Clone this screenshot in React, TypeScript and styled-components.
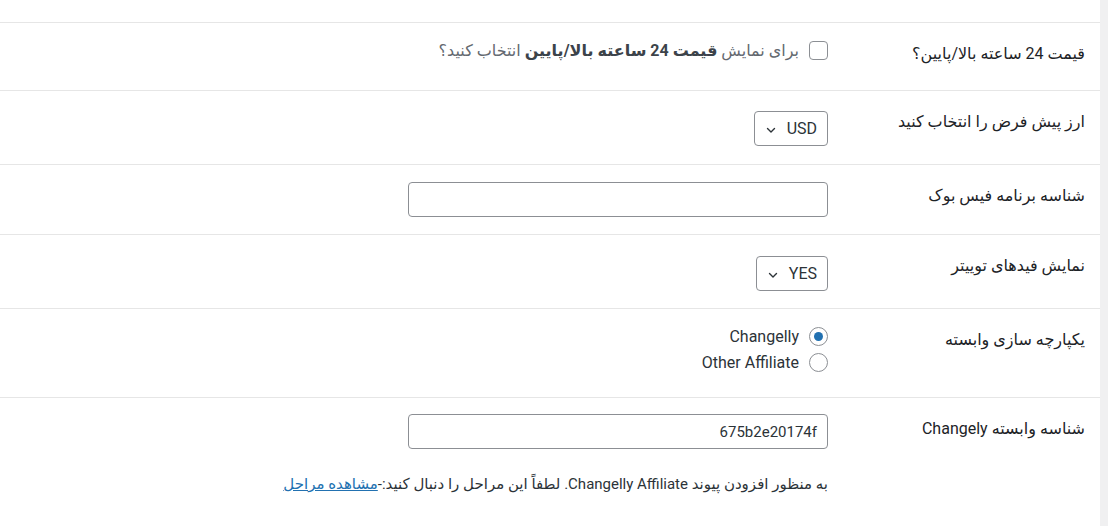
import styled, { createGlobalStyle } from 'styled-components'

const GlobalStyle = createGlobalStyle`
  html, body {
    margin: 0;
    padding: 0;
    background: #f0f0f1;
  }
  body {
    font-family: Roboto, "DejaVu Sans", sans-serif;
    color: #1d2327;
  }
`

const Panel = styled.div`
  width: 1100px;
  min-height: 526px;
  background: #fff;
  direction: rtl;
  padding-top: 22px;
  box-sizing: border-box;
`

const Row = styled.div<{ h: number }>`
  display: grid;
  grid-template-columns: 262px 1fr;
  height: ${p => p.h}px;
  border-top: 1px solid #e6e6e6;
  box-sizing: border-box;
`

const Label = styled.div`
  padding: 20px 15px 0 0;
  font-size: 16px;
  line-height: 22px;
  color: #1d2327;
`

const Cell = styled.div<{ top: number }>`
  padding: ${p => p.top}px 10px 0 0;
  display: flex;
  flex-direction: column;
  align-items: flex-start;
`

const CheckLine = styled.label`
  display: flex;
  align-items: center;
  gap: 10px;
  font-size: 16px;
  color: #646970;
  b {
    color: #3c434a;
    font-weight: 700;
  }
`

const Box = styled.span`
  width: 17px;
  height: 17px;
  border: 1px solid #8c8f94;
  border-radius: 4px;
  background: #fff;
  flex: none;
`

const Select = styled.div`
  display: flex;
  align-items: center;
  gap: 10px;
  height: 35px;
  box-sizing: border-box;
  padding: 0 10px;
  border: 1px solid #8c8f94;
  border-radius: 4px;
  font-size: 16px;
  color: #2c3338;
  background: #fff;
  svg {
    margin-top: 3px;
  }
`

const Input = styled.div`
  width: 420px;
  height: 35px;
  box-sizing: border-box;
  border: 1px solid #8c8f94;
  border-radius: 4px;
  padding: 0 10px;
  display: flex;
  align-items: center;
  font-size: 15px;
  color: #2c3338;
  background: #fff;
`

const RadioLine = styled.label`
  display: flex;
  align-items: center;
  gap: 10px;
  height: 26px;
  font-size: 16px;
  color: #2c3338;
`

const Radio = styled.span<{ checked?: boolean }>`
  width: 17px;
  height: 17px;
  border: 1px solid #8c8f94;
  border-radius: 50%;
  background: #fff;
  display: grid;
  place-items: center;
  flex: none;
  &::after {
    content: '';
    width: 9px;
    height: 9px;
    border-radius: 50%;
    background: ${p => (p.checked ? '#2271b1' : 'transparent')};
  }
`

const Description = styled.p`
  margin: 26px 0 0;
  font-size: 15px;
  color: #2c3338;
  a {
    color: #2271b1;
    text-decoration: underline;
  }
`

const Chevron = () => (
  <svg width="12" height="12" viewBox="0 0 12 12" fill="none">
    <path d="M2.5 4.5 6 8l3.5-3.5" stroke="#2c3338" strokeWidth="1.4" strokeLinecap="round" strokeLinejoin="round" />
  </svg>
)

const Dropdown = (props: { value: string }) => (
  <Select>
    <span>{props.value}</span>
    <Chevron />
  </Select>
)

export default function App() {
  return (
    <>
      <GlobalStyle />
      <Panel>
        <Row h={68}>
          <Label>قیمت 24 ساعته بالا/پایین؟</Label>
          <Cell top={18}>
            <CheckLine>
              <Box />
              <span>برای نمایش <b>قیمت 24 ساعته بالا/پایین</b> انتخاب کنید؟</span>
            </CheckLine>
          </Cell>
        </Row>
        <Row h={74}>
          <Label>ارز پیش فرض را انتخاب کنید</Label>
          <Cell top={20}>
            <Dropdown value="USD" />
          </Cell>
        </Row>
        <Row h={70}>
          <Label>شناسه برنامه فیس بوک</Label>
          <Cell top={17}>
            <Input />
          </Cell>
        </Row>
        <Row h={74}>
          <Label>نمایش فیدهای توییتر</Label>
          <Cell top={21}>
            <Dropdown value="YES" />
          </Cell>
        </Row>
        <Row h={89}>
          <Label>یکپارچه سازی وابسته</Label>
          <Cell top={14}>
            <RadioLine>
              <Radio checked />
              <span>Changelly</span>
            </RadioLine>
            <RadioLine>
              <Radio />
              <span>Other Affiliate</span>
            </RadioLine>
          </Cell>
        </Row>
        <Row h={129}>
          <Label>شناسه وابسته Changely</Label>
          <Cell top={16}>
            <Input>675b2e20174f</Input>
            <Description>
              به منظور افزودن پیوند Changelly Affiliate. لطفاً این مراحل را دنبال کنید:-<a href="#">مشاهده مراحل</a>
            </Description>
          </Cell>
        </Row>
      </Panel>
    </>
  )
}
